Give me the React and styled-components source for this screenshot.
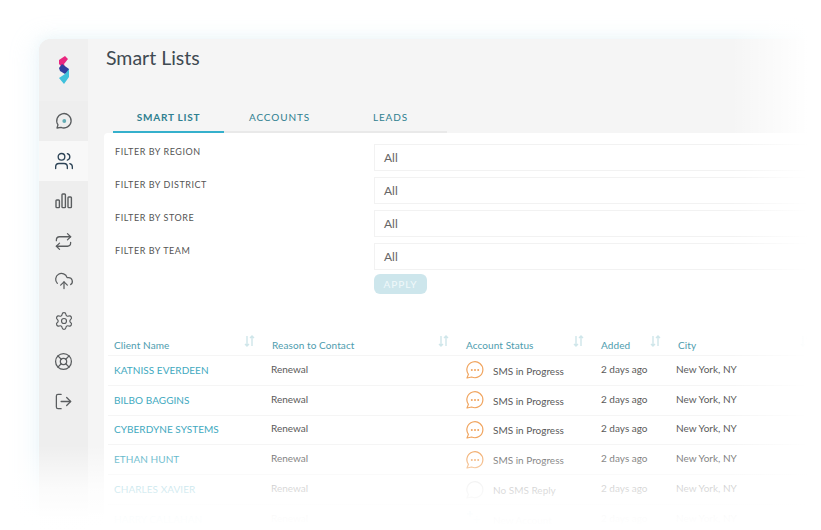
import React from "react";
import styled, { createGlobalStyle } from "styled-components";
import {
  Users,
  Repeat,
  CloudUpload,
  Settings,
  LifeBuoy,
  LogOut,
} from "lucide-react";

const teal = "#2f7f90";
const link = "#3fa9c0";
const ink = "#5a5a5a";

const Global = createGlobalStyle`
  html, body { margin: 0; padding: 0; background: #fff; }
  body { font-family: "Lato", "Noto Sans", sans-serif; overflow: hidden; }
`;

const Page = styled.div`
  position: relative;
  width: 821px;
  height: 530px;
  overflow: hidden;
  padding: 39px 0 0 39px;
  box-sizing: border-box;
`;
const Window = styled.div`
  display: flex;
  width: 790px;
  height: 500px;
  border-top-left-radius: 12px;
  overflow: hidden;
  background: #f5f5f5;
  box-shadow: -6px 0 24px rgba(190, 225, 235, 0.22), 0 -3px 12px rgba(190, 225, 235, 0.14);
`;
const Sidebar = styled.nav`
  width: 49px;
  flex: none;
  background: #eeeeee;
  display: flex;
  flex-direction: column;
`;
const Logo = styled.div`
  height: 62px;
  flex: none;
  display: flex;
  align-items: center;
  justify-content: center;
  background: #f0f0f0;
`;
const NavItem = styled.div`
  height: 40px;
  flex: none;
  display: flex;
  align-items: center;
  justify-content: center;
  color: ${(p) => (p.$active ? "#2c4356" : "#5a5d5f")};
  background: ${(p) => (p.$active ? "#f8f8f8" : "transparent")};
`;
const Main = styled.main`
  flex: 1;
  min-width: 0;
  display: flex;
  flex-direction: column;
`;
const Title = styled.h1`
  flex: none;
  margin: 0;
  padding: 6px 0 0 18px;
  height: 47px;
  box-sizing: border-box;
  font-size: 19.5px;
  line-height: 26px;
  font-weight: 400;
  color: #3f4a52;
`;
const Tabs = styled.div`
  flex: none;
  display: flex;
  margin: 0 0 0 25px;
  width: 334px;
  height: 47px;
  box-sizing: border-box;
  border-bottom: 2px solid #e9e9e9;
`;
const Tab = styled.div`
  width: 111px;
  height: 47px;
  box-sizing: border-box;
  padding-top: 24px;
  text-align: center;
  font-size: 10px;
  line-height: 14px;
  letter-spacing: ${(p) => (p.$active ? "0.75px" : "0.9px")};
  font-weight: ${(p) => (p.$active ? 700 : 400)};
  color: ${teal};
  border-bottom: 2px solid ${(p) => (p.$active ? "#35b0cc" : "transparent")};
`;
const Card = styled.section`
  flex: 1;
  margin-left: 16px;
  background: #fff;
  border-top-left-radius: 4px;
  padding-top: 11px;
`;
const Filter = styled.div`
  display: grid;
  grid-template-columns: 270px 1fr;
  margin-bottom: 6px;
`;
const FilterLabel = styled.label`
  padding: 2px 0 0 11px;
  font-size: 9px;
  line-height: 12px;
  letter-spacing: 0.55px;
  color: #555;
`;
const Select = styled.div`
  height: 27px;
  box-sizing: border-box;
  border: 1px solid #f2f2f2;
  padding: 0 9px;
  font-size: 12px;
  line-height: 25px;
  color: #666;
`;
const Apply = styled.button`
  display: block;
  margin: -2px 0 0 270px;
  width: 53px;
  height: 20px;
  padding: 0;
  border: 0;
  border-radius: 6px;
  background: #cde6ec;
  color: #f0f8fa;
  font: 400 10px "Lato", sans-serif;
  letter-spacing: 1px;
`;
const Table = styled.div`
  margin-top: 41px;
  padding-left: 4px;
`;
const Row = styled.div`
  display: grid;
  grid-template-columns: 158px 194px 135px 75px 130px;
  height: ${(p) => (p.$head ? "21px" : "29.8px")};
  box-sizing: border-box;
  border-bottom: 1px solid #f5f5f5;
  padding-left: 6px;
  align-items: ${(p) => (p.$head ? "start" : "center")};
`;
const HeadCell = styled.div`
  position: relative;
  font-size: 10px;
  line-height: 14px;
  padding: 3px 0 0 ${(p) => p.$shift || 0}px;
  letter-spacing: 0.1px;
  color: #4d9cae;
`;
const SortIcon = styled.svg`
  position: absolute;
  top: 0;
  left: ${(p) => p.$x}px;
  color: #cfe6ea;
`;
const Name = styled.div`
  font-size: 10px;
  color: ${link};
  letter-spacing: 0.05px;
  margin-top: -1px;
`;
const Cell = styled.div`
  font-size: 10px;
  color: ${ink};
  margin-top: -3px;
  margin-left: ${(p) => p.$shift || 0}px;
`;
const Status = styled.div`
  display: flex;
  align-items: center;
  gap: 9px;
  font-size: 10px;
  color: ${ink};
`;
const StatusText = styled.span`
  margin-top: 1px;
`;
const FadeRight = styled.div`
  position: absolute;
  top: 0;
  right: 0;
  bottom: 0;
  width: 90px;
  background: linear-gradient(to right, rgba(255, 255, 255, 0), #fff 85%);
`;
const FadeBottom = styled.div`
  position: absolute;
  left: 0;
  right: 0;
  bottom: 0;
  height: 85px;
  background: linear-gradient(to bottom, rgba(255, 255, 255, 0) 0%, rgba(255, 255, 255, 0.75) 50%, rgba(255, 255, 255, 0.98) 85%, #fff 100%);
`;

function LogoMark() {
  return (
    <svg width="12" height="28" viewBox="0 0 12 28">
      <path d="M1 4 L7 0 L10 3 L6 8 L7 11 L4 11 L1 8Z" fill="#e9277f" />
      <path d="M1 12 L4 8 L11 13 L11 15 L7 18 L2 15Z" fill="#2f3f9e" />
      <path d="M7 18 L11 13 L11 21 L6 28 L1 22Z" fill="#3fc1dc" />
    </svg>
  );
}

function Chat() {
  return (
    <svg width="18" height="18" viewBox="0 0 18 18" fill="none">
      <path
        d="M2 16l1-3.2A7.2 7.2 0 1 1 6 15.3L2 16z"
        stroke="currentColor"
        strokeWidth="1.3"
        strokeLinejoin="round"
      />
      <circle cx="9.3" cy="9" r="1.9" fill="#63adb5" />
    </svg>
  );
}

function Bars() {
  return (
    <svg width="18" height="18" viewBox="0 0 18 18" fill="none" stroke="currentColor" strokeWidth="1.4">
      <rect x="1" y="8" width="3.4" height="7.6" rx="0.8" />
      <rect x="7" y="2" width="3.4" height="13.6" rx="0.8" />
      <rect x="13" y="5" width="3.4" height="10.6" rx="0.8" />
    </svg>
  );
}

function Bubble({ kind }) {
  if (kind === "new") {
    return (
      <svg width="18" height="18" viewBox="0 0 18 18" fill="none" stroke="#9fd5e2" strokeWidth="1.2">
        <path d="M4 1v6M1 4h6M11 6v7M7.5 9.5h7" />
      </svg>
    );
  }
  const empty = kind === "empty";
  const color = empty ? "#dcdcdc" : "#f0a45e";
  return (
    <svg width="18" height="18" viewBox="0 0 18 18" fill="none">
      <path
        d="M1 17l1.4-3.6A8 8 0 1 1 5.6 16L1 17z"
        stroke={color}
        strokeWidth="1.2"
        strokeLinejoin="round"
      />
      {!empty && (
        <g fill={color}>
          <circle cx="5.8" cy="9" r="1" />
          <circle cx="9" cy="9" r="1" />
          <circle cx="12.2" cy="9" r="1" />
        </g>
      )}
    </svg>
  );
}

function Sort({ x }) {
  return (
    <SortIcon $x={x} width="11" height="12" viewBox="0 0 11 12" fill="none" stroke="currentColor" strokeWidth="1.4">
      <path d="M3 1v10M1 9l2 2 2-2M8 11V1M6 3l2-2 2 2" />
    </SortIcon>
  );
}

const clients = [
  ["KATNISS EVERDEEN", "SMS in Progress"],
  ["BILBO BAGGINS", "SMS in Progress"],
  ["CYBERDYNE SYSTEMS", "SMS in Progress"],
  ["ETHAN HUNT", "SMS in Progress"],
  ["CHARLES XAVIER", "No SMS Reply", "empty"],
  ["HARRY CALLAHAN", "New Account", "new"],
];

const navIcons = [
  [<Chat key="c" />],
  [<Users key="u" size={20} strokeWidth={1.6} />, true],
  [<Bars key="b" />],
  [<Repeat key="r" size={19} strokeWidth={1.6} />],
  [<CloudUpload key="cu" size={20} strokeWidth={1.5} />],
  [<Settings key="s" size={20} strokeWidth={1.4} />],
  [<LifeBuoy key="l" size={19} strokeWidth={1.6} />],
  [<LogOut key="o" size={19} strokeWidth={1.6} />],
];

const filters = ["REGION", "DISTRICT", "STORE", "TEAM"];

export default function App() {
  return (
    <Page>
      <Global />
      <Window>
        <Sidebar>
          <Logo>
            <LogoMark />
          </Logo>
          {navIcons.map(([icon, active], i) => (
            <NavItem key={i} $active={active}>
              {icon}
            </NavItem>
          ))}
        </Sidebar>
        <Main>
          <Title>Smart Lists</Title>
          <Tabs>
            <Tab $active>SMART LIST</Tab>
            <Tab>ACCOUNTS</Tab>
            <Tab>LEADS</Tab>
          </Tabs>
          <Card>
            {filters.map((f) => (
              <Filter key={f}>
                <FilterLabel>FILTER BY {f}</FilterLabel>
                <Select>All</Select>
              </Filter>
            ))}
            <Apply>APPLY</Apply>
            <Table>
              <Row $head>
                <HeadCell>
                  Client Name
                  <Sort x={130} />
                </HeadCell>
                <HeadCell>
                  Reason to Contact
                  <Sort x={166} />
                </HeadCell>
                <HeadCell>
                  Account Status
                  <Sort x={107} />
                </HeadCell>
                <HeadCell>
                  Added
                  <Sort x={49} />
                </HeadCell>
                <HeadCell $shift={2}>
                  City
                  <Sort x={124} />
                </HeadCell>
              </Row>
              {clients.map(([name, status, kind]) => (
                <Row key={name}>
                  <Name>{name}</Name>
                  <Cell $shift={-1}>Renewal</Cell>
                  <Status>
                    <Bubble kind={kind} />
                    <StatusText>{status}</StatusText>
                  </Status>
                  <Cell>2 days ago</Cell>
                  <Cell>New York, NY</Cell>
                </Row>
              ))}
            </Table>
          </Card>
        </Main>
      </Window>
      <FadeRight />
      <FadeBottom />
    </Page>
  );
}
